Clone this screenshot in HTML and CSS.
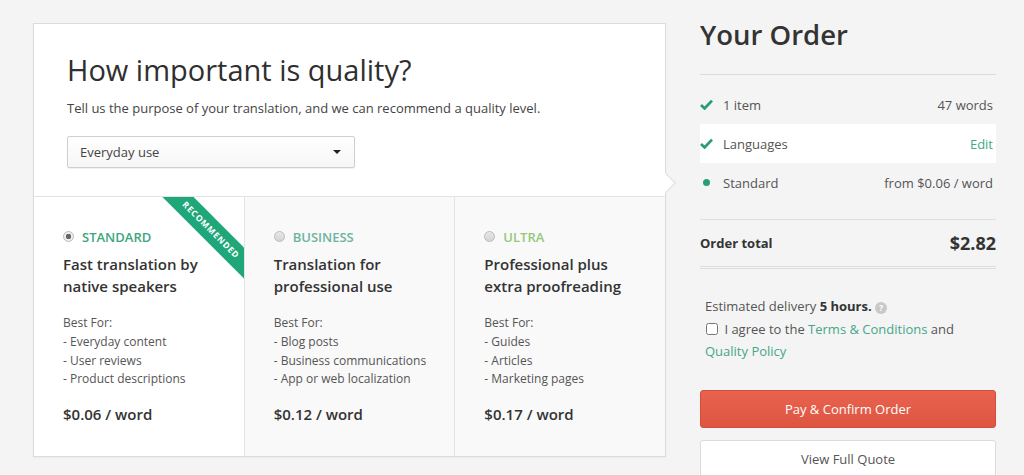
FILE: index.html
```html
<!DOCTYPE html>
<html lang="en">
<head>
    <meta charset="UTF-8">
    <meta name="viewport" content="width=device-width, initial-scale=1.0">
    <title>Order - Quality</title>
    <link rel="stylesheet" href="styles.css">
</head>
<body>
    <div class="page">
        <div class="quality-card">
            <div class="quality-top">
                <h1>How important is quality?</h1>
                <p class="intro">Tell us the purpose of your translation, and we can recommend a quality level.</p>
                <div class="select">
                    <span>Everyday use</span>
                    <span class="caret"></span>
                </div>
            </div>
            <div class="levels">
                <div class="level selected">
                    <div class="ribbon">RECOMMENDED</div>
                    <div class="level-name standard"><span class="radio checked"></span>STANDARD</div>
                    <h3>Fast translation by native speakers</h3>
                    <p class="best">Best For:</p>
                    <ul>
                        <li>- Everyday content</li>
                        <li>- User reviews</li>
                        <li>- Product descriptions</li>
                    </ul>
                    <div class="price">$0.06 / word</div>
                </div>
                <div class="level">
                    <div class="level-name business"><span class="radio"></span>BUSINESS</div>
                    <h3>Translation for professional use</h3>
                    <p class="best">Best For:</p>
                    <ul>
                        <li>- Blog posts</li>
                        <li>- Business communications</li>
                        <li>- App or web localization</li>
                    </ul>
                    <div class="price">$0.12 / word</div>
                </div>
                <div class="level">
                    <div class="level-name ultra"><span class="radio"></span>ULTRA</div>
                    <h3>Professional plus extra proofreading</h3>
                    <p class="best">Best For:</p>
                    <ul>
                        <li>- Guides</li>
                        <li>- Articles</li>
                        <li>- Marketing pages</li>
                    </ul>
                    <div class="price">$0.17 / word</div>
                </div>
            </div>
        </div>

        <div class="order">
            <h2>Your Order</h2>
            <div class="order-rows">
                <div class="order-row">
                    <span class="mark"><svg width="13" height="11" viewBox="0 0 13 11"><path d="M1 6 L4.6 9.4 L12 1.6" fill="none" stroke="#2a9d76" stroke-width="2.8"/></svg></span>
                    <span class="label">1 item</span>
                    <span class="value">47 words</span>
                </div>
                <div class="order-row active">
                    <span class="mark"><svg width="13" height="11" viewBox="0 0 13 11"><path d="M1 6 L4.6 9.4 L12 1.6" fill="none" stroke="#2a9d76" stroke-width="2.8"/></svg></span>
                    <span class="label">Languages</span>
                    <a class="edit" href="#">Edit</a>
                </div>
                <div class="order-row">
                    <span class="mark"><span class="dot"></span></span>
                    <span class="label">Standard</span>
                    <span class="value">from $0.06 / word</span>
                </div>
            </div>
            <div class="total">
                <span>Order total</span>
                <span class="amount">$2.82</span>
            </div>
            <div class="terms">
                <p>Estimated delivery <b>5 hours.</b> <span class="help">?</span></p>
                <p><input type="checkbox" class="agree"> I agree to the <a href="#">Terms &amp; Conditions</a> and <a href="#">Quality Policy</a></p>
            </div>
            <button class="pay">Pay &amp; Confirm Order</button>
            <button class="quote">View Full Quote</button>
        </div>
    </div>
</body>
</html>
```

FILE: styles.css
```css
body {
    margin: 0;
    background: #f4f4f4;
    font-family: "Open Sans", Arial, sans-serif;
    color: #555;
    font-size: 13px;
}
.page {
    display: flex;
    align-items: flex-start;
    gap: 34px;
    padding: 18px 0 0 33px;
}
.quality-card {
    width: 631px;
    margin-top: 5px;
    background: #fff;
    border: 1px solid #dcdcdc;
    box-shadow: 0 1px 2px rgba(0, 0, 0, 0.04);
}
.quality-top {
    position: relative;
    padding: 28px 33px 28px;
    border-bottom: 1px solid #e3e3e3;
}
.quality-top::after {
    content: "";
    position: absolute;
    right: -8px;
    bottom: 6px;
    width: 13px;
    height: 13px;
    background: #fff;
    border-top: 1px solid #dcdcdc;
    border-right: 1px solid #dcdcdc;
    transform: rotate(45deg);
}
h1 {
    margin: 0;
    font-size: 29px;
    font-weight: 400;
    line-height: 36px;
    color: #2f2f2f;
}
.intro {
    margin: 10px 0 0;
    line-height: 20px;
    color: #444;
}
.select {
    display: flex;
    justify-content: space-between;
    align-items: center;
    margin-top: 18px;
    padding: 0 12px;
    box-sizing: border-box;
    width: 288px;
    height: 32px;
    border: 1px solid #cfcfcf;
    border-radius: 2px;
    background: linear-gradient(#fff, #f6f6f6);
    box-shadow: 0 1px 1px rgba(0, 0, 0, 0.06);
    color: #444;
}
.caret {
    width: 0;
    height: 0;
    margin-right: 1px;
    border-left: 4px solid transparent;
    border-right: 4px solid transparent;
    border-top: 4px solid #222;
}
.levels {
    display: flex;
}
.level {
    position: relative;
    overflow: hidden;
    flex: 1;
    padding: 31px 20px 31px 29px;
    background: #f9f9f9;
    border-left: 1px solid #e3e3e3;
}
.level.selected {
    background: #fff;
    border-left: none;
}
.ribbon {
    position: absolute;
    top: 22px;
    right: -42px;
    width: 150px;
    height: 22px;
    line-height: 22px;
    background: #1fa77a;
    color: #fff;
    font-size: 8.5px;
    font-weight: 700;
    letter-spacing: 0.8px;
    text-align: center;
    transform: rotate(45deg);
}
.level-name {
    display: flex;
    align-items: center;
    font-size: 13px;
    font-weight: 600;
    line-height: 18px;
}
.level-name.standard { color: #3ea57c; }
.level-name.business { color: #6bb4a1; }
.level-name.ultra { color: #94c97a; }
.radio {
    width: 9px;
    height: 9px;
    margin-right: 8px;
    border: 1px solid #bbb;
    border-radius: 50%;
    background: linear-gradient(#e8e8e8, #d4d4d4);
    box-sizing: content-box;
    position: relative;
    top: -1px;
}
.radio.checked {
    background: radial-gradient(circle, #666 0 2.5px, #eee 3px);
}
h3 {
    margin: 7px 0 0;
    font-size: 15px;
    font-weight: 600;
    line-height: 22px;
    color: #333;
}
.best {
    margin: 16px 0 0;
    font-size: 12px;
    line-height: 20px;
}
ul {
    list-style: none;
    margin: 0;
    padding: 0;
    font-size: 12px;
    line-height: 18.5px;
}
.price {
    margin-top: 14px;
    font-size: 15px;
    font-weight: 600;
    color: #333;
    line-height: 22px;
}
.order {
    width: 296px;
}
h2 {
    margin: 0;
    font-size: 27.5px;
    font-weight: 600;
    line-height: 34px;
    color: #333;
}
.order-rows {
    margin-top: 22px;
    padding: 10px 0 17px;
    border-top: 1px solid #dcdcdc;
}
.order-row {
    display: flex;
    align-items: center;
    height: 39px;
    padding-right: 3px;
}
.order-row.active {
    background: #fff;
}
.mark {
    display: flex;
    align-items: center;
    justify-content: center;
    width: 13px;
    margin-right: 10px;
}
.dot {
    width: 7px;
    height: 7px;
    border-radius: 50%;
    background: #2a9d76;
}
.label {
    flex: 1;
}
.value {
    color: #555;
}
a {
    color: #45a68a;
    text-decoration: none;
}
.total {
    display: flex;
    justify-content: space-between;
    align-items: center;
    height: 46px;
    border-top: 1px solid #dedede;
    border-bottom: 3px double #dedede;
    font-weight: 700;
    color: #333;
}
.amount {
    font-size: 18px;
}
.terms {
    padding: 26px 5px 0;
}
.terms p {
    margin: 0;
    line-height: 22.5px;
}
.terms b {
    color: #333;
}
.help {
    display: inline-block;
    width: 12px;
    height: 12px;
    border-radius: 50%;
    background: #c8c8c8;
    color: #fff;
    font-size: 9px;
    font-weight: 700;
    line-height: 12px;
    text-align: center;
    vertical-align: 0;
}
.agree {
    width: 12px;
    height: 12px;
    margin: 0 3px 0 1px;
    vertical-align: -1px;
}
button {
    display: block;
    width: 296px;
    font-family: inherit;
    font-size: 13px;
    border-radius: 3px;
    cursor: pointer;
}
.pay {
    height: 38px;
    margin-top: 27px;
    border: 1px solid #d24d3a;
    background: linear-gradient(#e8624f, #de5641);
    color: #fff;
}
.quote {
    height: 38px;
    margin-top: 12px;
    border: 1px solid #dcdcdc;
    background: #fff;
    color: #555;
}
```
